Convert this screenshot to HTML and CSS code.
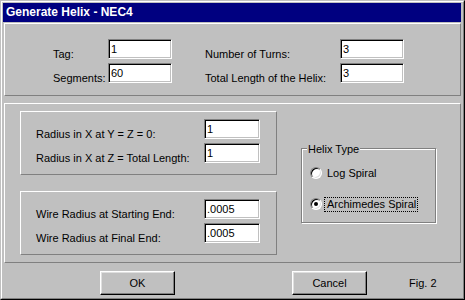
FILE: index.html
```html
<!DOCTYPE html>
<html lang="en">
<head>
  <meta charset="UTF-8" />
  <title>Generate Helix - NEC4</title>
  <link rel="stylesheet" href="styles.css">
</head>

<body>
  <div class="window">
    <div class="frame">
      <div class="titlebar">Generate Helix - NEC4</div>

      <!-- count / length -->
      <section class="panel panel-top">
        <div class="fields fields-a">
          <label for="tag">Tag:</label>
          <input type="text" id="tag" value="1" />
          <label for="segments">Segments:</label>
          <input type="text" id="segments" value="60" />
        </div>
        <div class="fields fields-b">
          <label for="turns">Number of Turns:</label>
          <input type="text" id="turns" value="3" />
          <label for="length">Total Length of the Helix:</label>
          <input type="text" id="length" value="3" />
        </div>
      </section>

      <!-- radii + helix type -->
      <section class="panel panel-main">
        <div class="boxes">
          <div class="box">
            <div class="fields fields-c">
              <label for="r1">Radius in X at Y = Z = 0:</label>
              <input type="text" id="r1" value="1" />
              <label for="r2">Radius in X at Z = Total Length:</label>
              <input type="text" id="r2" value="1" />
            </div>
          </div>
          <div class="box">
            <div class="fields fields-c">
              <label for="w1">Wire Radius at Starting End:</label>
              <input type="text" id="w1" value=".0005" />
              <label for="w2">Wire Radius at Final End:</label>
              <input type="text" id="w2" value=".0005" />
            </div>
          </div>
        </div>

        <div class="group">
          <span class="group-title">Helix Type</span>
          <div class="radio-row">
            <span class="radio"></span>
            <span class="radio-text">Log Spiral</span>
          </div>
          <div class="radio-row">
            <span class="radio checked"></span>
            <span class="radio-text focus">Archimedes Spiral</span>
          </div>
        </div>
      </section>

      <div class="buttons">
        <button class="btn btn-ok">OK</button>
        <button class="btn btn-cancel">Cancel</button>
        <span class="fig">Fig. 2</span>
      </div>
    </div>
  </div>
</body>
</html>
```

FILE: styles.css
```css
* {
  margin: 0;
  padding: 0;
  box-sizing: border-box;
}

html, body {
  width: 465px;
  height: 300px;
  background: #c0c0c0;
  font-family: "Liberation Sans", Arial, sans-serif;
  font-size: 11px;
  color: #000;
  overflow: hidden;
}

.window {
  width: 465px;
  height: 300px;
  border: 1px solid;
  border-color: #c0c0c0 #000 #000 #c0c0c0;
}

.frame {
  height: 100%;
  border: 1px solid;
  border-color: #fff #808080 #808080 #fff;
  padding: 1px 2px 0 1px;
}

.titlebar {
  height: 19px;
  line-height: 19px;
  padding-left: 3px;
  background: #000080;
  color: #fff;
  font-size: 12px;
  font-weight: bold;
  margin-bottom: 1px;
}

/* raised 1px panels */
.panel,
.box {
  border: 1px solid;
  border-color: #fff #808080 #808080 #fff;
}

.panel {
  margin-left: 1px;
}

.panel-top {
  height: 73px;
  display: flex;
  gap: 33px;
  padding: 15px 0 0 48px;
}

.panel-main {
  height: 160px;
  margin-top: 7px;
  display: flex;
}

/* label + edit box grids */
.fields {
  display: grid;
  grid-auto-rows: 20px;
  row-gap: 4px;
}

.fields-a {
  grid-template-columns: 55px 64px;
}

.fields-b {
  grid-template-columns: 135px 64px;
}

.fields-c {
  grid-template-columns: 168px 56px;
}

.fields label {
  line-height: 20px;
  padding-top: 5px;
  white-space: nowrap;
}

input[type="text"] {
  width: 100%;
  height: 20px;
  font: inherit;
  line-height: 16px;
  padding: 0 2px;
  color: #000;
  background: #fff;
  border: 1px solid;
  border-color: #808080 #fff #fff #808080;
  box-shadow: inset 1px 1px 0 #000, inset -1px -1px 0 #c0c0c0;
  outline: none;
}

.boxes {
  width: 257px;
  margin: 7px 0 0 15px;
}

.box {
  height: 64px;
  padding: 7px 0 0 15px;
}

.box + .box {
  margin-top: 16px;
}

/* etched group box */
.group {
  width: 135px;
  height: 75px;
  margin: 44px 0 0 24px;
  border: 1px solid #808080;
  box-shadow: 1px 1px 0 #fff, inset 1px 1px 0 #fff;
}

.group-title {
  display: block;
  width: max-content;
  margin: -6px 0 0 5px;
  padding: 0 1px;
  line-height: 13px;
  background: #c0c0c0;
}

.radio-row {
  display: flex;
  align-items: center;
  gap: 2px;
  height: 16px;
  margin: 9px 0 0 8px;
}

.radio-row + .radio-row {
  margin-top: 15px;
}

.radio {
  width: 12px;
  height: 12px;
  border-radius: 50%;
  background: #fff;
  border: 1px solid;
  border-color: #808080 #fff #fff #808080;
  box-shadow: inset 1px 1px 0 #000, inset -1px -1px 0 #dfdfdf;
  display: flex;
  align-items: center;
  justify-content: center;
}

.radio.checked::after {
  content: "";
  width: 4px;
  height: 4px;
  border-radius: 50%;
  background: #000;
}

.radio-text {
  line-height: 13px;
  padding: 0 1px 0 2px;
  border: 1px dotted transparent;
}

.radio-text.focus {
  border-color: #000;
}

/* bottom buttons */
.buttons {
  display: flex;
  align-items: center;
  height: 24px;
  margin-top: 8px;
  padding-left: 97px;
}

.btn {
  width: 75px;
  height: 24px;
  font: inherit;
  color: #000;
  background: #c0c0c0;
  border: 1px solid;
  border-color: #fff #000 #000 #fff;
  box-shadow: inset -1px -1px 0 #808080, inset 1px 1px 0 #dfdfdf;
}

.btn-cancel {
  margin-left: 117px;
}

.fig {
  margin-left: 42px;
  line-height: 24px;
}
```
